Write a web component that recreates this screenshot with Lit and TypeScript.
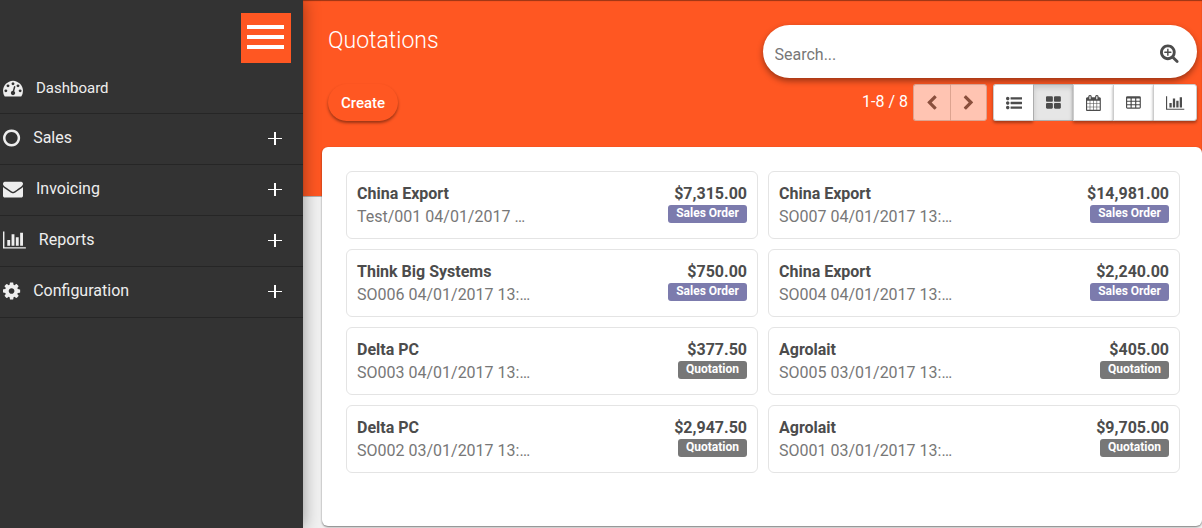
import { LitElement, html, css, svg } from "lit";
import { customElement, property, state } from "lit/decorators.js";

const paths: Record<string, string> = {
  gauge:
    "M384 1152q0-53-37.5-90.5t-90.5-37.5-90.5 37.5-37.5 90.5 37.5 90.5 90.5 37.5 90.5-37.5 37.5-90.5zm192-448q0-53-37.5-90.5t-90.5-37.5-90.5 37.5-37.5 90.5 37.5 90.5 90.5 37.5 90.5-37.5 37.5-90.5zm428 481l101-382q6-26-7.5-48.5t-38.5-29.5-48 6.5-30 39.5l-101 382q-60 5-107 43.5t-63 98.5q-20 77 20 146t117 89 146-20 89-117q16-60-6-117t-72-91zm660-33q0-53-37.5-90.5t-90.5-37.5-90.5 37.5-37.5 90.5 37.5 90.5 90.5 37.5 90.5-37.5 37.5-90.5zm-640-640q0-53-37.5-90.5t-90.5-37.5-90.5 37.5-37.5 90.5 37.5 90.5 90.5 37.5 90.5-37.5 37.5-90.5zm448 192q0-53-37.5-90.5t-90.5-37.5-90.5 37.5-37.5 90.5 37.5 90.5 90.5 37.5 90.5-37.5 37.5-90.5zm320 448q0 261-141 483-19 29-54 29h-1402q-35 0-54-29-141-221-141-483 0-182 71-348t191-286 286-191 348-71 348 71 286 191 191 286 71 348z",
  circle:
    "M768 352q-148 0-273 73t-198 198-73 273 73 273 198 198 273 73 273-73 198-198 73-273-73-273-198-198-273-73zm768 544q0 209-103 385.500t-279.500 279.500-385.500 103-385.500-103-279.500-279.500-103-385.500 103-385.500 279.500-279.500 385.500-103 385.500 103 279.500 279.500 103 385.500z",
  envelope:
    "M1792 710v794q0 66-47 113t-113 47h-1472q-66 0-113-47t-47-113v-794q44 49 101 87 362 246 497 345 57 42 92.5 65.5t94.5 48 110 24.5h2q51 0 110-24.5t94.5-48 92.5-65.5q170-123 498-345 57-39 100-87zm0-294q0 79-49 151t-122 123q-376 261-468 325-10 7-42.5 31t-54 38.500-52 32.500-57.500 27-50 9h-2q-23 0-50-9t-57.500-27-52-32.500-54-38.500-42.500-31q-91-64-262-182.500t-205-142.500q-62-42-117-115.500t-55-136.500q0-78 41.500-130t118.500-52h1472q65 0 112.500 47t47.500 113z",
  chart:
    "M640 896v512h-256v-512h256zm384-512v1024h-256v-1024h256zm1024 1152v128h-2048v-1536h128v1408h1920zm-640-896v768h-256v-768h256zm384-384v1152h-256v-1152h256z",
  cog:
    "M1024 896q0-106-75-181t-181-75-181 75-75 181 75 181 181 75 181-75 75-181zm512-109v222q0 12-8 23t-20 13l-185 28q-19 54-39 91 35 50 107 138 10 12 10 25t-9 23q-27 37-99 108t-94 71q-12 0-26-9l-138-108q-44 23-91 38-16 136-29 186-7 28-36 28h-222q-14 0-24.500-8.500t-11.500-21.500l-28-184q-49-16-90-37l-141 107q-10 9-25 9-14 0-25-11-126-114-165-168-7-10-7-23 0-12 8-23 15-21 51-66.500t54-70.500q-27-50-41-99l-183-27q-13-2-21-12.500t-8-23.500v-222q0-12 8-23t19-13l186-28q14-46 39-92-40-57-107-138-10-12-10-24 0-10 9-23 26-36 98.500-107.500t94.500-71.500q13 0 26 10l138 107q44-23 91-38 16-136 29-186 7-28 36-28h222q14 0 24.500 8.500t11.500 21.500l28 184q49 16 90 37l142-107q9-9 24-9 13 0 25 10 129 119 165 170 7 8 7 22 0 12-8 23-15 21-51 66.500t-54 70.500q26 50 41 98l183 28q13 2 21 12.500t8 23.500z",
  searchPlus:
    "M1024 800v64q0 13-9.500 22.500t-22.500 9.500h-224v224q0 13-9.500 22.500t-22.500 9.500h-64q-13 0-22.500-9.500t-9.500-22.500v-224h-224q-13 0-22.500-9.500t-9.500-22.500v-64q0-13 9.500-22.500t22.500-9.500h224v-224q0-13 9.500-22.500t22.500-9.500h64q13 0 22.500 9.500t9.500 22.500v224h224q13 0 22.500 9.500t9.500 22.500zm128 32q0-185-131.500-316.500t-316.500-131.500-316.500 131.500-131.500 316.500 131.500 316.500 316.500 131.500 316.500-131.500 131.500-316.500zm512 832q0 53-37.500 90.500t-90.500 37.500q-54 0-90-38l-343-342q-179 124-399 124-143 0-273.500-55.500t-225-150-150-225-55.500-273.500 55.500-273.500 150-225 225-150 273.500-55.500 273.500 55.500 225 150 150 225 55.500 273.500q0 220-124 399l343 343q37 37 37 90z",
  left:
    "M1171 301l-531 531 531 531q19 19 19 45t-19 45l-166 166q-19 19-45 19t-45-19l-742-742q-19-19-19-45t19-45l742-742q19-19 45-19t45 19l166 166q19 19 19 45t-19 45z",
  right:
    "M1107 877l-742 742q-19 19-45 19t-45-19l-166-166q-19-19-19-45t19-45l531-531-531-531q-19-19-19-45t19-45l166-166q19-19 45-19t45 19l742 742q19 19 19 45t-19 45z",
  list:
    "M384 1408q0 80-56 136t-136 56-136-56-56-136 56-136 136-56 136 56 56 136zm0-512q0 80-56 136t-136 56-136-56-56-136 56-136 136-56 136 56 56 136zm1408 416v192q0 13-9.500 22.500t-22.500 9.500h-1216q-13 0-22.500-9.500t-9.500-22.500v-192q0-13 9.500-22.500t22.500-9.500h1216q13 0 22.500 9.500t9.500 22.500zm-1408-928q0 80-56 136t-136 56-136-56-56-136 56-136 136-56 136 56 56 136zm1408 416v192q0 13-9.500 22.500t-22.500 9.500h-1216q-13 0-22.500-9.500t-9.500-22.500v-192q0-13 9.500-22.500t22.500-9.500h1216q13 0 22.500 9.500t9.500 22.500zm0-512v192q0 13-9.500 22.500t-22.500 9.500h-1216q-13 0-22.500-9.500t-9.500-22.500v-192q0-13 9.500-22.500t22.500-9.500h1216q13 0 22.500 9.500t9.500 22.500z",
  kanban:
    "M768 1024v384q0 52-38 90t-90 38h-512q-52 0-90-38t-38-90v-384q0-52 38-90t90-38h512q52 0 90 38t38 90zm0-768v384q0 52-38 90t-90 38h-512q-52 0-90-38t-38-90v-384q0-52 38-90t90-38h512q52 0 90 38t38 90zm896 768v384q0 52-38 90t-90 38h-512q-52 0-90-38t-38-90v-384q0-52 38-90t90-38h512q52 0 90 38t38 90zm0-768v384q0 52-38 90t-90 38h-512q-52 0-90-38t-38-90v-384q0-52 38-90t90-38h512q52 0 90 38t38 90z",
  calendar:
    "M128 1664h288v-288h-288v288zm352 0h320v-288h-320v288zm-352-352h288v-320h-288v320zm352 0h320v-320h-320v320zm-352-384h288v-288h-288v288zm736 736h320v-288h-320v288zm-384-736h320v-288h-320v288zm768 736h288v-288h-288v288zm-384-352h320v-320h-320v320zm-352-864v-288q0-13-9.500-22.500t-22.500-9.500h-64q-13 0-22.500 9.500t-9.500 22.500v288q0 13 9.500 22.500t22.500 9.500h64q13 0 22.500-9.500t9.500-22.500zm736 864h288v-320h-288v320zm-384-384h320v-288h-320v288zm384 0h288v-288h-288v288zm32-480v-288q0-13-9.500-22.500t-22.500-9.500h-64q-13 0-22.500 9.500t-9.500 22.500v288q0 13 9.500 22.500t22.500 9.500h64q13 0 22.500-9.500t9.500-22.500zm384-64v1280q0 52-38 90t-90 38h-1408q-52 0-90-38t-38-90v-1280q0-52 38-90t90-38h128v-96q0-66 47-113t113-47h64q66 0 113 47t47 113v96h384v-96q0-66 47-113t113-47h64q66 0 113 47t47 113v96h128q52 0 90 38t38 90z",
  table:
    "M160 128h1344q66 0 113 47t47 113v1088q0 66-47 113t-113 47h-1344q-66 0-113-47t-47-113v-1088q0-66 47-113t113-47zM128 416v192q0 32 32 32h320q32 0 32-32v-192q0-32-32-32h-320q-32 0-32 32zm512 0v192q0 32 32 32h320q32 0 32-32v-192q0-32-32-32h-320q-32 0-32 32zm512 0v192q0 32 32 32h320q32 0 32-32v-192q0-32-32-32h-320q-32 0-32 32zM128 800v192q0 32 32 32h320q32 0 32-32v-192q0-32-32-32h-320q-32 0-32 32zm512 0v192q0 32 32 32h320q32 0 32-32v-192q0-32-32-32h-320q-32 0-32 32zm512 0v192q0 32 32 32h320q32 0 32-32v-192q0-32-32-32h-320q-32 0-32 32zM128 1184v192q0 32 32 32h320q32 0 32-32v-192q0-32-32-32h-320q-32 0-32 32zm512 0v192q0 32 32 32h320q32 0 32-32v-192q0-32-32-32h-320q-32 0-32 32zm512 0v192q0 32 32 32h320q32 0 32-32v-192q0-32-32-32h-320q-32 0-32 32z",
};

const widths: Record<string, number> = {
  gauge: 1792, circle: 1536, envelope: 1792, chart: 2048, cog: 1536, searchPlus: 1664,
  left: 1280, right: 1280, list: 1792, kanban: 1664, calendar: 1664, table: 1664,
};

@customElement("ui-icon")
class UiIcon extends LitElement {
  static styles = css`
    :host { display: inline-flex; flex: none; }
    .glyph { display: block; height: 1em; width: auto; fill: currentColor; overflow: visible; }
  `;
  @property() name = "circle";
  render() {
    return html`<svg class="glyph" viewBox="0 0 ${widths[this.name]} 1792" aria-hidden="true">
      ${svg`<path fill-rule="evenodd" d=${paths[this.name]}></path>`}
    </svg>`;
  }
}

const menu = [
  { icon: "gauge", label: "Dashboard", more: false },
  { icon: "circle", label: "Sales", more: true },
  { icon: "envelope", label: "Invoicing", more: true },
  { icon: "chart", label: "Reports", more: true },
  { icon: "cog", label: "Configuration", more: true },
];

@customElement("side-menu")
class SideMenu extends LitElement {
  static styles = css`
    :host { display: block; background: #333; color: #eee; }
    .top { display: flex; justify-content: flex-end; padding: 13px 12px 0 0; }
    .toggle {
      display: flex; flex-direction: column; gap: 6px; box-sizing: border-box;
      width: 50px; height: 50px; padding: 12px 7px 0 6px; border: 0; background: #ff5722;
    }
    .bar { height: 4px; width: 100%; background: #fff; }
    .items { list-style: none; margin: 0; padding: 0; }
    .item { border-bottom: 1px solid #262626; }
    .link {
      display: flex; align-items: center; height: 50px; padding: 0 21px 0 3px;
      color: inherit; text-decoration: none; font-size: 15px;
    }
    .icon { font-size: 20px; margin-right: 13px; }
    .label { flex: 1; }
    .parent { font-size: 16px; line-height: 20px; padding-bottom: 2px; height: 48px; }
    .plus { width: 14px; height: 14px; fill: #fff; }
  `;
  render() {
    return html`
      <div class="top">
        <button class="toggle" aria-label="Toggle menu">
          <span class="bar"></span><span class="bar"></span><span class="bar"></span>
        </button>
      </div>
      <nav><ul class="items">
        ${menu.map((m) => html`<li class="item"><a class="link ${m.more ? "parent" : ""}" href="#">
          <ui-icon class="icon" name=${m.icon}></ui-icon><span class="label">${m.label}</span>
          ${m.more ? html`<svg class="plus" viewBox="0 0 14 14" aria-hidden="true"><path d="M0 7h14v1H0zM6 1h2v13H6z"></path></svg>` : ""}
        </a></li>`)}
      </ul></nav>`;
  }
}

interface Order { customer: string; ref: string; amount: string; status: string; }
const orders: Order[] = [
  { customer: "China Export", ref: "Test/001 04/01/2017 …", amount: "$7,315.00", status: "Sales Order" },
  { customer: "China Export", ref: "SO007 04/01/2017 13:…", amount: "$14,981.00", status: "Sales Order" },
  { customer: "Think Big Systems", ref: "SO006 04/01/2017 13:…", amount: "$750.00", status: "Sales Order" },
  { customer: "China Export", ref: "SO004 04/01/2017 13:…", amount: "$2,240.00", status: "Sales Order" },
  { customer: "Delta PC", ref: "SO003 04/01/2017 13:…", amount: "$377.50", status: "Quotation" },
  { customer: "Agrolait", ref: "SO005 03/01/2017 13:…", amount: "$405.00", status: "Quotation" },
  { customer: "Delta PC", ref: "SO002 03/01/2017 13:…", amount: "$2,947.50", status: "Quotation" },
  { customer: "Agrolait", ref: "SO001 03/01/2017 13:…", amount: "$9,705.00", status: "Quotation" },
];

@customElement("order-card")
class OrderCard extends LitElement {
  static styles = css`
    :host { display: block; }
    .card {
      display: flex; justify-content: space-between; box-sizing: border-box; height: 68px;
      padding: 10px; border: 1px solid #e4e4e4; border-radius: 6px; background: #fff;
    }
    .left { white-space: nowrap; }
    .name, .amount { font-size: 16px; line-height: 23px; font-weight: 700; color: #4c4c4c; }
    .ref { font-size: 16px; line-height: 23px; color: #777; }
    .right { display: flex; flex-direction: column; align-items: flex-end; }
    .badge {
      height: 18px; padding: 0 8px; border-radius: 3px; background: #777;
      color: #fff; font-size: 12px; line-height: 16px; font-weight: 700;
    }
    .sale { background: #7c7bad; }
  `;
  @property({ attribute: false }) order: Order = orders[0];
  render() {
    const o = this.order;
    return html`<article class="card">
      <div class="left"><div class="name">${o.customer}</div><div class="ref">${o.ref}</div></div>
      <div class="right">
        <div class="amount">${o.amount}</div>
        <span class="badge ${o.status === "Sales Order" ? "sale" : ""}">${o.status}</span>
      </div>
    </article>`;
  }
}

@customElement("app-root")
class AppRoot extends LitElement {
  static styles = css`
    :host {
      display: grid; grid-template-columns: 303px minmax(0, 1fr); min-height: 100vh;
      font-family: Roboto, "Liberation Sans", sans-serif; background: #f1f1f1; color: #4c4c4c;
    }
    .side { z-index: 1; box-shadow: 0 0 16px rgba(0, 0, 0, 0.4); }
    .main { min-width: 0; }
    .head {
      display: flex; flex-direction: column; gap: 6px; padding: 25px 5px 75px 25px;
      background: #ff5722; color: #fff; border-bottom: 1px solid #b0b0b0;
      box-shadow: inset 0 1px 1px rgba(0, 0, 0, 0.4);
    }
    .row { display: flex; justify-content: space-between; }
    .title { margin: 0; font-size: 23px; line-height: 31px; font-weight: 300; }
    .search {
      display: flex; align-items: center; box-sizing: border-box; width: 50%; height: 53px;
      padding: 6px 18px 0 12px; border-radius: 27px; background: #fff; color: #4c4c4c;
      box-shadow: 0 3px 6px rgba(0, 0, 0, 0.4);
    }
    .field {
      flex: 1; min-width: 0; border: 0; padding: 0; outline: 0; background: none;
      font: inherit; font-size: 16px; color: #4c4c4c;
    }
    .field::placeholder { color: #777; opacity: 1; }
    .more { border: 0; padding: 2px 0 0; background: none; color: #4c4c4c; font-size: 20px; }
    .create {
      height: 37px; padding: 0 13px; border: 0; border-radius: 19px; background: #ff5722;
      color: #fff; font: 500 15px Roboto, sans-serif; box-shadow: 0 2px 3px rgba(0, 0, 0, 0.4);
    }
    .tools { display: flex; align-items: center; }
    .count { font-size: 16px; line-height: 20px; padding-bottom: 2px; margin-right: 5px; }
    .group { display: flex; height: 37px; margin-right: 6px; }
    .group:last-child { margin-right: 0; }
    .btn {
      display: flex; align-items: center; justify-content: center; box-sizing: border-box;
      width: 40px; padding: 0; border: 1px solid #ccc; border-right-width: 0;
      background: #fff; color: #4c4c4c; font-size: 16px; box-shadow: 0 2px 3px rgba(0, 0, 0, 0.35);
    }
    .btn:first-child { border-radius: 3px 0 0 3px; }
    .btn:last-child { width: 44px; border-radius: 0 3px 3px 0; border-right-width: 1px; }
    .active { background: #e6e6e6; border-color: #adadad; box-shadow: inset 0 3px 5px rgba(0, 0, 0, 0.125); }
    .pager { opacity: 0.65; }
    .btn.page { width: 37px; box-shadow: none; }
    .panel {
      display: grid; grid-template-columns: repeat(2, minmax(0, 1fr)); gap: 10px;
      margin: -50px 0 0 19px; padding: 24px 22px 53px 24px; border-radius: 6px; background: #fff;
      box-shadow: 0 1px 2px rgba(0, 0, 0, 0.5);
    }
  `;
  @state() private view = "kanban";
  private views = [
    ["list", "List"], ["kanban", "Kanban"], ["calendar", "Calendar"], ["table", "Pivot"], ["chart", "Graph"],
  ];
  render() {
    return html`
      <side-menu class="side"></side-menu>
      <main class="main">
        <header class="head">
          <div class="row">
            <h1 class="title">Quotations</h1>
            <div class="search">
              <input class="field" type="text" placeholder="Search..." aria-label="Search" />
              <button class="more" aria-label="Advanced search"><ui-icon name="searchPlus"></ui-icon></button>
            </div>
          </div>
          <div class="row">
            <button class="create">Create</button>
            <div class="tools">
              <span class="count">1-8 / 8</span>
              <div class="group pager">
                <button class="btn page" aria-label="Previous"><ui-icon name="left"></ui-icon></button>
                <button class="btn page" aria-label="Next"><ui-icon name="right"></ui-icon></button>
              </div>
              <div class="group">
                ${this.views.map(([id, label]) => html`<button
                  class="btn ${this.view === id ? "active" : ""}" aria-label=${label}
                  @click=${() => (this.view = id)}><ui-icon name=${id}></ui-icon></button>`)}
              </div>
            </div>
          </div>
        </header>
        <section class="panel">
          ${orders.map((o) => html`<order-card .order=${o}></order-card>`)}
        </section>
      </main>`;
  }
}
